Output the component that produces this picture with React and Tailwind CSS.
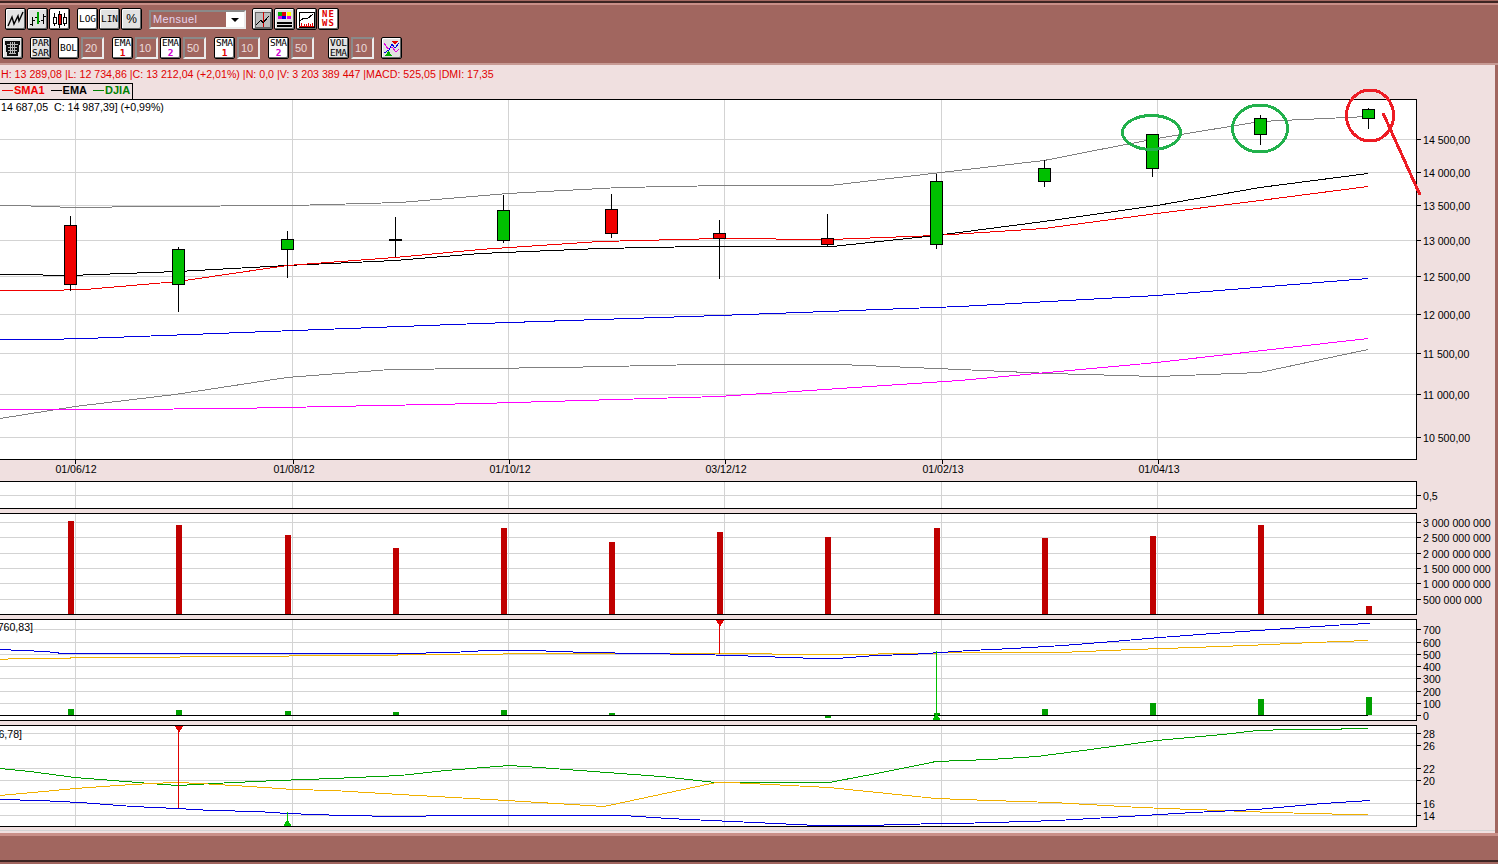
import React from 'react';

// x centre of each monthly candle
const CX = [70.5, 178.5, 287.5, 395.5, 503.5, 611.5, 719.5, 827.5, 936.5, 1044.5, 1152.5, 1260.5, 1368.5];
const GRID_X = [75.5, 292.5, 508.5, 724.5, 941.5, 1157.5];

const CANDLES = [
  [216, 225, 284, 291, 'r'], [247, 249, 284, 312, 'g'], [231, 239, 249, 278, 'g'], [217, 239, 241, 257, 'd'],
  [195, 210, 240, 243, 'g'], [194, 209, 233, 238, 'r'], [220, 233, 238, 279, 'r'], [214, 238, 244, 246, 'r'],
  [174, 181, 244, 249, 'g'], [160, 168, 181, 187, 'g'], [134, 134, 168, 177, 'g'], [115, 118, 134, 145, 'g'],
  [108, 109, 118, 129, 'g'],
];

const toPoints = (pts) => pts.map((p) => p.join(',')).join(' ');

const MAIN_LINES = [
  ['#808080', [[0, 205.5], [16, 205.5], [75, 207.5], [150, 206.5], [292, 205.5], [400, 202.5], [508, 193.5], [620, 187.5], [724, 185.5], [830, 185.5], [941, 172.5], [1044, 160.5], [1100, 149.5], [1157, 138.5], [1260, 121.5], [1368, 116.5]]],
  ['#808080', [[0, 418.5], [75, 406.5], [175, 394.5], [287, 377.5], [390, 369.5], [480, 368.5], [560, 367.5], [700, 364.5], [840, 364.5], [960, 369.5], [1050, 373.5], [1157, 376.5], [1260, 372.5], [1368, 349.5]]],
  ['#ff00ff', [[0, 409.5], [115, 409.5], [233, 408.5], [480, 403.5], [719, 396.5], [960, 380.5], [1157, 362.5], [1368, 338.5]]],
  ['#0000e0', [[0, 339.5], [43, 339.5], [85, 338.5], [295, 330.5], [480, 323.5], [719, 315.5], [960, 306.5], [1157, 295.5], [1368, 278.5]]],
  ['#000000', [[0, 274.5], [16, 274.5], [70, 275.5], [178, 271.5], [287, 265.5], [395, 260.5], [480, 253.5], [600, 248.5], [700, 246.5], [832, 246.5], [936, 235.5], [1044, 221.5], [1157, 205.5], [1260, 187.5], [1368, 173.5]]],
  ['#f00000', [[0, 290.5], [43, 290.5], [85, 289.5], [178, 281.5], [287, 265.5], [395, 257.5], [480, 249.5], [600, 241.5], [719, 238.5], [830, 239.5], [936, 235.5], [1044, 228.5], [1157, 213.5], [1260, 200.5], [1368, 186.5]]],
];

const VOLUME_TOPS = [521, 525, 535, 548, 528, 542, 532, 537, 528, 538, 536, 525, 606];
const MACD_BARS = [709, 710, 711, 712, 710, 713, 715, 718, 713, 709, 703, 699, 697];

const MACD_LINES = [
  ['#f0b000', [[0, 659.5], [16, 658.5], [125, 657.5], [235, 656.5], [345, 655.5], [450, 654.5], [557, 653.5], [771, 653.5], [773, 654.5], [875, 654.5], [882, 653.5], [990, 652.5], [1060, 652.5], [1133, 649.5], [1193, 647.5], [1247, 645.5], [1313, 642.5], [1368, 640.5]]],
  ['#0000e0', [[0, 649.5], [45, 651.5], [63, 653.5], [400, 653.5], [452, 652.5], [487, 650.5], [532, 650.5], [586, 652.5], [643, 653.5], [696, 654.5], [734, 655.5], [789, 657.5], [816, 658.5], [837, 658.5], [875, 655.5], [911, 654.5], [970, 650.5], [1013, 648.5], [1063, 645.5], [1113, 641.5], [1160, 637.5], [1213, 633.5], [1273, 629.5], [1347, 624.5], [1370, 623.5]]],
];

const DMI_LINES = [
  ['#00a000', [[0, 768.5], [30, 771.5], [75, 777.5], [113, 780.5], [150, 783.5], [178, 785.5], [213, 783.5], [277, 780.5], [333, 778.5], [400, 775.5], [446, 770.5], [509, 765.5], [539, 767.5], [607, 772.5], [661, 776.5], [716, 782.5], [829, 782.5], [882, 772.5], [936, 761.5], [990, 759.5], [1037, 756.5], [1083, 750.5], [1157, 740.5], [1223, 734.5], [1257, 730.5], [1290, 729.5], [1340, 729.5], [1343, 728.5], [1368, 728.5]]],
  ['#f0b000', [[0, 795.5], [33, 792.5], [75, 788.5], [117, 785.5], [150, 783.5], [177, 782.5], [200, 783.5], [250, 786.5], [293, 789.5], [333, 790.5], [400, 794.5], [507, 800.5], [604, 806.5], [716, 782.5], [730, 782.5], [829, 787.5], [936, 798.5], [990, 800.5], [1053, 802.5], [1140, 807.5], [1220, 810.5], [1273, 812.5], [1313, 813.5], [1350, 814.5], [1368, 814.5]]],
  ['#0000e0', [[0, 799.5], [40, 800.5], [80, 802.5], [133, 806.5], [177, 808.5], [212, 810.5], [257, 811.5], [287, 813.5], [343, 815.5], [400, 816.5], [452, 815.5], [623, 815.5], [668, 818.5], [711, 820.5], [754, 822.5], [796, 824.5], [818, 825.5], [882, 825.5], [886, 824.5], [957, 823.5], [993, 822.5], [1057, 820.5], [1127, 816.5], [1193, 812.5], [1257, 809.5], [1323, 803.5], [1370, 800.5]]],
];

const Lines = ({ data }) =>
  data.map(([color, pts], i) => (
    <polyline key={i} points={toPoints(pts)} fill="none" stroke={color} strokeWidth="1" shapeRendering="crispEdges" />
  ));

// one chart pane plus its axis rail, drawn in page coordinates
const Panel = ({ top, bottom, gridY, ticks, children }) => {
  const h = bottom - top - 1;
  return (
    <div className="flex" style={{ height: bottom - top + 1 }}>
      <div className="w-[1417px] shrink-0 border-y border-r border-black bg-white">
        <svg width="1416" height={h} viewBox={`0 ${top + 1} 1416 ${h}`} className="block" shapeRendering="crispEdges">
          {gridY.map((y) => (
            <line key={y} x1="0" x2="1416" y1={y} y2={y} stroke="#d3d3d3" />
          ))}
          {GRID_X.map((x) => (
            <line key={x} x1={x} x2={x} y1={top} y2={bottom} stroke="#d3d3d3" />
          ))}
          {children}
        </svg>
      </div>
      <svg width="78" height={bottom - top + 1} viewBox={`1417 ${top} 78 ${bottom - top + 1}`} className="block shrink-0">
        {ticks.map(([y, label]) => (
          <g key={label}>
            <line x1="1417" x2="1421" y1={y} y2={y} stroke="#000" shapeRendering="crispEdges" />
            <text x="1423" y={y + 4} fontSize="10.6" fill="#000">{label}</text>
          </g>
        ))}
      </svg>
    </div>
  );
};

const Btn = ({ on, className = '', children }) => (
  <div
    className={`flex h-[22px] w-[21px] items-center justify-center rounded-[2px] border border-black shadow-[inset_-1px_-1px_0_#666,inset_1px_1px_0_#fff] ${on ? 'bg-white' : 'bg-[#e2e2e2]'} ${className}`}
  >
    {children}
  </div>
);

const Label = ({ a, b, color }) => (
  <div className="flex flex-col items-center text-[9.5px] leading-[10px] text-black [font-family:'DejaVu_Sans_Mono',monospace]">
    <span>{a}</span>
    <span style={color ? { color, fontWeight: 700 } : undefined}>{b}</span>
  </div>
);

const Word = ({ children }) => (
  <span className="text-[9.5px] text-black [font-family:'DejaVu_Sans_Mono',monospace]">{children}</span>
);

const NumBox = ({ value, className = '' }) => (
  <div className={`flex h-[22px] w-[23px] items-center pl-[2px] text-[11px] text-[#ecdcdc] border-2 border-t-[#8a8a8a] border-l-[#8a8a8a] border-r-[#ececec] border-b-[#ececec] ${className}`}>
    {value}
  </div>
);

const Icon = ({ children }) => (
  <svg width="17" height="17" viewBox="0 0 17 17" shapeRendering="crispEdges">{children}</svg>
);

const Toolbar = () => (
  <div className="flex h-[65px] shrink-0 flex-col pt-px">
    <div className="h-[2px] bg-[#3d2523]" />
    <div className="h-[2px] bg-[#c98f88]" />
    <div className="mt-[3px] flex h-[22px] items-start pl-[5px]">
      <div className="flex gap-px">
        <Btn>
          <Icon>
            <polyline points="1,15 5,6 7,13 11,5 12,10 16,1" fill="none" stroke="#000" strokeWidth="1.4" shapeRendering="auto" />
          </Icon>
        </Btn>
        <Btn>
          <Icon>
            <path d="M3.500 6v9M1 13h2M4 9h2M14.500 3v10M12 9h2M15 5h2" stroke="#000" fill="none" />
            <path d="M6 6h2M9 10h2" stroke="#000" fill="none" />
            <path d="M8.500 1v12" stroke="#00a000" strokeWidth="2" />
          </Icon>
        </Btn>
        <Btn on>
          <Icon>
            <path d="M3.500 2v13M8.500 0v17M13.500 2v13" stroke="#000" />
            <rect x="2" y="6" width="3" height="6" fill="#fff" stroke="#000" />
            <rect x="7" y="3" width="3" height="10" fill="#e00000" stroke="#000" />
            <rect x="12" y="6" width="3" height="6" fill="#fff" stroke="#000" />
          </Icon>
        </Btn>
      </div>
      <div className="ml-[7px] flex gap-px">
        <Btn on><Word>LOG</Word></Btn>
        <Btn><Word>LIN</Word></Btn>
        <Btn><span className="text-[12px] text-black">%</span></Btn>
      </div>
      <div className="ml-[7px] mt-[2px] flex h-[19px] w-[97px] items-center justify-between border-2 border-t-[#8a8a8a] border-l-[#8a8a8a] border-r-[#ececec] border-b-[#ececec] pl-[2px] text-[11px] tracking-[0.4px] text-[#e6d4ee]">
        Mensuel
        <div className="flex h-full w-[18px] items-center justify-center bg-white">
          <div className="h-0 w-0 border-x-[4px] border-t-[4px] border-x-transparent border-t-black" />
        </div>
      </div>
      <div className="ml-[6px] flex gap-px">
        <Btn>
          <Icon>
            <rect x="1" y="1" width="15" height="15" fill="#bdbdbd" stroke="#666" />
            <path d="M9.500 1v15" stroke="#d00000" />
            <polyline points="2,14 7,9 9,12 15,5" fill="none" stroke="#000" />
          </Icon>
        </Btn>
        <Btn>
          <Icon>
            <rect x="2" y="1" width="4" height="4" fill="#00b000" />
            <rect x="6" y="1" width="4" height="4" fill="#e00000" />
            <rect x="11" y="1" width="4" height="4" fill="#ffff00" />
            <rect x="2" y="5" width="4" height="3" fill="#e000e0" />
            <rect x="6" y="5" width="4" height="3" fill="#0000e0" />
            <rect x="11" y="5" width="4" height="3" fill="#e000e0" />
            <path d="M1 11.500h15M1 14.500h15" stroke="#000" strokeWidth="2" />
          </Icon>
        </Btn>
        <Btn on>
          <Icon>
            <rect x="1" y="1" width="15" height="15" fill="#fff" stroke="#000" />
            <polyline points="2,10 6,7 9,8 15,3" fill="none" stroke="#000" />
            <path d="M3 15v-3M6 15v-2M8 15v-2M10 15v-3M12 15v-2M14 15v-3" stroke="#e00000" />
            <path d="M1 15.500h15" stroke="#e00000" />
          </Icon>
        </Btn>
        <Btn on>
          <div className="flex flex-col items-center text-[9px] font-bold leading-[9px] tracking-[1px] text-[#e00000] [font-family:'DejaVu_Sans_Mono',monospace]">
            <span>NE</span>
            <span>WS</span>
          </div>
        </Btn>
      </div>
    </div>
    <div className="mt-[7px] flex h-[22px] items-start pl-[2px]">
      <Btn>
        <Icon>
          <path d="M1 1h15l-2 15H3z" fill="#111" />
          <path d="M3 4h11M4 7h9M4 10h9M5 13h7M6.500 2v12M8.500 2v12M10.500 2v12" stroke="#bbb" />
        </Icon>
      </Btn>
      <Btn className="ml-[7px]"><Label a="PAR" b="SAR" /></Btn>
      <Btn on className="ml-[7px]"><Word>BOL</Word></Btn>
      <NumBox value="20" className="ml-[2px]" />
      <Btn on className="ml-[8px]"><Label a="EMA" b="1" color="#e00000" /></Btn>
      <NumBox value="10" className="ml-[2px]" />
      <Btn on className="ml-[2px]"><Label a="EMA" b="2" color="#d000d0" /></Btn>
      <NumBox value="50" className="ml-[2px]" />
      <Btn on className="ml-[8px]"><Label a="SMA" b="1" color="#e00000" /></Btn>
      <NumBox value="10" className="ml-[2px]" />
      <Btn on className="ml-[8px]"><Label a="SMA" b="2" color="#d000d0" /></Btn>
      <NumBox value="50" className="ml-[2px]" />
      <Btn className="ml-[14px]"><Label a="VOL" b="EMA" /></Btn>
      <NumBox value="10" className="ml-[2px]" />
      <Btn className="ml-[7px]">
        <Icon>
          <polyline points="1,3 5,9 9,7 13,12 16,9" fill="none" stroke="#e000e0" />
          <polyline points="1,13 6,10 9,4 12,8 16,3" fill="none" stroke="#0000e0" />
          <path d="M9 1h6l-3 4z" fill="#e00000" />
          <path d="M2 16h7l-3.500-5z" fill="#00b000" />
        </Icon>
      </Btn>
    </div>
    <div className="mt-auto h-[2px] bg-[#c79a94]" />
  </div>
);

const Legend = () => (
  <div className="flex h-[16px] w-[133px] items-center gap-[6px] border-t border-r border-black pb-[2px] pl-[2px] text-[11px] font-bold leading-none">
    <span className="flex items-center gap-px text-[#f00000]"><span className="h-px w-[11px] bg-[#f00000]" />SMA1</span>
    <span className="flex items-center gap-px text-black"><span className="h-px w-[11px] bg-black" />EMA</span>
    <span className="flex items-center gap-px text-[#008000]"><span className="h-px w-[11px] bg-[#008000]" />DJIA</span>
  </div>
);

const MainChart = () => (
  <Panel
    top={99}
    bottom={459}
    gridY={[139.5, 172.5, 205.5, 240.5, 276.5, 314.5, 353.5, 394.5, 437.5]}
    ticks={[
      [139.5, '14 500,00'], [172.5, '14 000,00'], [205.5, '13 500,00'], [240.5, '13 000,00'], [276.5, '12 500,00'],
      [314.5, '12 000,00'], [353.5, '11 500,00'], [394.5, '11 000,00'], [437.5, '10 500,00'],
    ]}
  >
    <text x="1" y="111" fontSize="10.6" fill="#000" shapeRendering="auto" xmlSpace="preserve">14 687,05  C: 14 987,39] (+0,99%)</text>
    <Lines data={MAIN_LINES} />
    {CANDLES.map(([hi, top, bot, lo, kind], i) => {
      const x = CX[i];
      return (
        <g key={x}>
          <line x1={x} x2={x} y1={hi} y2={lo} stroke="#000" />
          {kind === 'd' ? (
            <line x1={x - 6.5} x2={x + 6.5} y1="240" y2="240" stroke="#000" strokeWidth="2" />
          ) : (
            <rect x={x - 6} y={top + 0.5} width="12" height={bot - top} fill={kind === 'r' ? '#f00000' : '#00c000'} stroke="#000" />
          )}
        </g>
      );
    })}
  </Panel>
);

const DATES = [
  ['01/06/12', 76],
  ['01/08/12', 294],
  ['01/10/12', 510],
  ['03/12/12', 726],
  ['01/02/13', 943],
  ['01/04/13', 1159],
];

const DateAxis = () => (
  <svg width="1417" height="21" viewBox="0 460 1417 21" className="block shrink-0">
    {DATES.map(([label, x]) => (
      <g key={label}>
        <line x1={x - 0.5} x2={x - 0.5} y1="460" y2="464" stroke="#000" shapeRendering="crispEdges" />
        <text x={x} y="473" fontSize="10.6" textAnchor="middle" fill="#000">{label}</text>
      </g>
    ))}
  </svg>
);

export default function App() {
  return (
    <div className="relative flex h-[864px] w-[1498px] flex-col overflow-hidden bg-[#a1665f] [font-family:'Liberation_Sans',Arial,sans-serif]">
      <Toolbar />

      <div className="flex h-[768px] w-[1495px] shrink-0 flex-col bg-[#f0e0e0]">
        <div className="flex h-[18px] shrink-0 items-center pl-px pt-[1px] text-[10.65px] text-[#e00000]">
          H: 13 289,08 |L: 12 734,86 |C: 13 212,04 (+2,01%) |N: 0,0 |V: 3 203 389 447 |MACD: 525,05 |DMI: 17,35
        </div>
        <Legend />
        <MainChart />
        <DateAxis />
        <div className="flex flex-col gap-[4px]">
          <Panel top={481} bottom={508} gridY={[495.5]} ticks={[[495.5, '0,5']]} />
          <Panel
            top={513}
            bottom={614}
            gridY={[522.5, 537.5, 553.5, 568.5, 583.5, 599.5]}
            ticks={[
              [522.5, '3 000 000 000'], [537.5, '2 500 000 000'], [553.5, '2 000 000 000'],
              [568.5, '1 500 000 000'], [583.5, '1 000 000 000'], [599.5, '500 000 000'],
            ]}
          >
            {VOLUME_TOPS.map((y, i) => (
              <rect key={i} x={CX[i] - 2.5} y={y} width="6" height={614 - y} fill="#c00000" />
            ))}
          </Panel>
          <Panel
            top={619}
            bottom={720}
            gridY={[629.5, 642.5, 654.5, 666.5, 678.5, 691.5, 703.5, 715.5]}
            ticks={[
              [629.5, '700'], [642.5, '600'], [654.5, '500'], [666.5, '400'],
              [678.5, '300'], [691.5, '200'], [703.5, '100'], [715.5, '0'],
            ]}
          >
            <text x="33" y="631" fontSize="10.6" textAnchor="end" fill="#000">760,83]</text>
            <Lines data={MACD_LINES} />
            {MACD_BARS.map((y, i) =>
              y === 715 ? null : (
                <rect key={i} x={CX[i] - 2.5} y={Math.min(y, 715)} width="6" height={Math.abs(715 - y)} fill="#00a000" />
              ),
            )}
            <line x1="0" x2="1368" y1="715.5" y2="715.5" stroke="#000" />
            <line x1="719.5" x2="719.5" y1="620" y2="654" stroke="#e00000" />
            <path d="M716 620h8l-4 7z" fill="#e00000" />
            <line x1="936.5" x2="936.5" y1="651" y2="720" stroke="#00c000" />
            <path d="M932.500 720h8l-4 -7z" fill="#00c000" />
          </Panel>
          <Panel
            top={725}
            bottom={826}
            gridY={[733.5, 745.5, 768.5, 780.5, 803.5, 815.5]}
            ticks={[
              [733.5, '28'], [745.5, '26'], [768.5, '22'], [780.5, '20'], [803.5, '16'], [815.5, '14'],
            ]}
          >
            <text x="22" y="738" fontSize="10.6" textAnchor="end" fill="#000">6,78]</text>
            <Lines data={DMI_LINES} />
            <line x1="178.5" x2="178.5" y1="726" y2="808" stroke="#e00000" />
            <path d="M175 726h8l-4 7z" fill="#e00000" />
            <line x1="287.5" x2="287.5" y1="812" y2="826" stroke="#00c000" />
            <path d="M283.500 826h8l-4 -7z" fill="#00c000" />
          </Panel>
        </div>
        <div className="mt-[3px] h-px bg-[#d3d3d3]" />
      </div>

      <div className="flex flex-1 flex-col border-t-[3px] border-[#c98f88]">
        <div className="mb-[2px] mt-auto h-[2px] bg-[#3d2523]" />
      </div>

      {/* hand drawn marks on top of the screenshot */}
      <svg width="1498" height="864" className="pointer-events-none absolute inset-0" fill="none" strokeWidth="3" shapeRendering="crispEdges">
        <ellipse cx="1151.5" cy="132.500" rx="29" ry="17" stroke="#22b14c" />
        <ellipse cx="1260" cy="128.500" rx="27.500" ry="23.500" stroke="#22b14c" />
        <ellipse cx="1370" cy="115.500" rx="23.500" ry="25.500" stroke="#ed1c24" />
        <line x1="1383" y1="113" x2="1420" y2="195" stroke="#ed1c24" />
      </svg>
    </div>
  );
}
